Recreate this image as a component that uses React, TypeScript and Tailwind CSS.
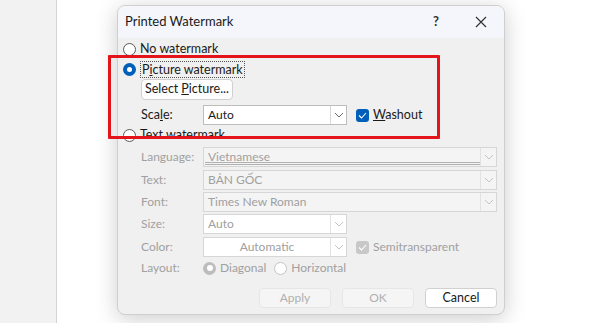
import React from 'react';

const font = { fontFamily: 'Lato, "Noto Sans", sans-serif' };

function Chevron({ dim }: { dim?: boolean }) {
  return (
    <svg width="10" height="6" viewBox="0 0 10 6" className={dim ? 'text-[#c4c4c4]' : 'text-[#6b6b6b]'}>
      <path d="M1 1 L5 5 L9 1" fill="none" stroke="currentColor" strokeWidth="1" />
    </svg>
  );
}

function Radio({ checked, disabled }: { checked?: boolean; disabled?: boolean }) {
  if (checked) {
    return (
      <span
        className={`w-[13px] h-[13px] rounded-full flex items-center justify-center shrink-0 ${
          disabled ? 'bg-[#bdbdbd]' : 'bg-[#005fb8]'
        }`}
      >
        <span className={`${disabled ? 'w-[6px] h-[6px]' : 'w-[5px] h-[5px]'} rounded-full bg-white`} />
      </span>
    );
  }
  return (
    <span
      className={`w-[13px] h-[13px] rounded-full border shrink-0 bg-white ${
        disabled ? 'border-[#c4c4c4]' : 'border-[#5a5a5a]'
      }`}
    />
  );
}

function Check({ disabled }: { disabled?: boolean }) {
  return (
    <span
      className={`w-[13px] h-[13px] rounded-[3px] flex items-center justify-center shrink-0 ${
        disabled ? 'bg-[#c8c8c8]' : 'bg-[#005fb8]'
      }`}
    >
      <svg width="9" height="7" viewBox="0 0 9 7">
        <path d="M1 3.5 L3.5 6 L8 1" fill="none" stroke="white" strokeWidth="1.1" />
      </svg>
    </span>
  );
}

function Select({
  value,
  width,
  disabled,
  white,
  center,
  doubleLine,
}: {
  value: string;
  width: string;
  disabled?: boolean;
  white?: boolean;
  center?: boolean;
  doubleLine?: boolean;
}) {
  return (
    <div
      className={`${width} h-[20px] flex border ${
        disabled ? 'border-[#d6d6d6]' : 'border-[#bdbdbd]'
      } ${white ? 'bg-white' : 'bg-[#f4f4f4]'}`}
    >
      <div
        className={`flex-1 relative flex items-center px-[4px] text-[12px] ${
          disabled ? 'text-[#a0a0a0]' : 'text-[#1a1a1a]'
        } ${center ? 'justify-center' : ''}`}
      >
        {value}
        {doubleLine && (
          <div className="absolute left-[1px] right-0 bottom-[1px] h-[3px] border-y border-[#b0b0b0]" />
        )}
      </div>
      <div
        className={`w-[16px] flex items-center justify-center border-l ${
          disabled ? 'border-[#e2e2e2]' : 'border-[#d8d8d8]'
        } ${white ? 'bg-white' : 'bg-[#f4f4f4]'}`}
      >
        <Chevron dim={disabled} />
      </div>
    </div>
  );
}

function Row({ label, children, mt }: { label: string; children: React.ReactNode; mt: string }) {
  return (
    <div className={`flex items-center h-[20px] ${mt}`}>
      <span className="w-[62px] pl-[18px] box-content text-[12px] text-[#a0a0a0] shrink-0">{label}</span>
      {children}
    </div>
  );
}

export default function App() {
  return (
    <div className="relative w-[600px] h-[323px] overflow-hidden flex bg-white" style={font}>
      <div className="w-[57px] bg-[#f2f2f2] border-r border-[#d4d4d4]" />
      <div className="flex-1 bg-white" />

      {/* dialog */}
      <div className="absolute left-[117px] top-[5px] w-[388px] h-[310px] rounded-[8px] bg-[#f0f0f0] border border-[#cfcfcf] shadow-[0_4px_22px_rgba(0,0,0,0.2)] overflow-hidden flex flex-col">
        <div className="h-[32px] bg-[#f4f6fb] flex items-center pl-[7px] shrink-0">
          <span className="text-[13px] text-[#1a1a1a] flex-1">Printed Watermark</span>
          <span className="text-[13px] text-[#333] font-bold mr-[36px]">?</span>
          <svg width="12" height="12" viewBox="0 0 12 12" className="mr-[17px]">
            <path d="M1 1 L11 11 M11 1 L1 11" stroke="#333" strokeWidth="1.2" />
          </svg>
        </div>

        <div className="flex flex-col pl-[5px] pr-[7px]">
          <div className="flex items-center h-[20px] mt-[1px] gap-[4px]">
            <Radio />
            <span className="text-[12.5px] text-[#1a1a1a]">No watermark</span>
          </div>
          <div className="flex items-center h-[20px] gap-[4px]">
            <Radio checked />
            <span className="text-[12.5px] text-[#1a1a1a] border border-dotted border-[#555] px-[1px] leading-[15px]">
              P<span className="underline">i</span>cture watermark
            </span>
          </div>
          <div className="h-[21px] flex pl-[18px]">
            <button className="w-[92px] h-[21px] bg-[#fdfdfd] border border-[#d0d0d0] rounded-[4px] text-[12.5px] text-[#1a1a1a] flex items-center justify-center">
              Select <span className="underline ml-[3px]">P</span>icture...
            </button>
          </div>
          <div className="flex items-center h-[20px] mt-[5px]">
            <span className="w-[62px] pl-[18px] box-content text-[12.5px] text-[#1a1a1a] shrink-0">
              Sca<span className="underline">l</span>e:
            </span>
            <Select value="Auto" width="w-[144px]" white />
            <div className="flex items-center gap-[4px] ml-[9px]">
              <Check />
              <span className="text-[12.5px] text-[#1a1a1a]">
                <span className="underline">W</span>ashout
              </span>
            </div>
          </div>
          <div className="flex items-center h-[20px] gap-[4px]">
            <Radio />
            <span className="text-[12.5px] text-[#1a1a1a]">Text watermark</span>
          </div>

          <Row label="Language:" mt="mt-[2px]">
            <Select value="Vietnamese" width="flex-1" disabled doubleLine />
          </Row>
          <Row label="Text:" mt="mt-[3px]">
            <Select value="BẢN GỐC" width="flex-1" disabled />
          </Row>
          <Row label="Font:" mt="mt-[2px]">
            <Select value="Times New Roman" width="flex-1" disabled />
          </Row>
          <Row label="Size:" mt="mt-[2px]">
            <Select value="Auto" width="w-[144px]" disabled white />
          </Row>
          <Row label="Color:" mt="mt-[3px]">
            <Select value="Automatic" width="w-[144px]" disabled white center />
            <div className="flex items-center gap-[4px] ml-[9px]">
              <Check disabled />
              <span className="text-[12px] text-[#a0a0a0]">Semitransparent</span>
            </div>
          </Row>
          <Row label="Layout:" mt="mt-[1px]">
            <div className="flex items-center gap-[4px]">
              <Radio checked disabled />
              <span className="text-[12px] text-[#a0a0a0]">Diagonal</span>
            </div>
            <div className="flex items-center gap-[4px] ml-[8px]">
              <Radio disabled />
              <span className="text-[12px] text-[#a0a0a0]">Horizontal</span>
            </div>
          </Row>

          <div className="flex justify-end gap-[11px] mt-[10px]">
            <button className="w-[72px] h-[20px] rounded-[4px] bg-[#f5f5f5] border border-[#e6e6e6] text-[12px] text-[#b0b0b0]">
              Apply
            </button>
            <button className="w-[72px] h-[20px] rounded-[4px] bg-[#f5f5f5] border border-[#e6e6e6] text-[12px] text-[#b0b0b0]">
              OK
            </button>
            <button className="w-[72px] h-[20px] rounded-[4px] bg-white border border-[#d0d0d0] text-[12.5px] text-[#1a1a1a]">
              Cancel
            </button>
          </div>
        </div>
      </div>

      {/* red annotation box */}
      <div className="absolute left-[108px] top-[55px] w-[332px] h-[84px] border-[3px] border-[#e3151a] rounded-[1px]" />
    </div>
  );
}
